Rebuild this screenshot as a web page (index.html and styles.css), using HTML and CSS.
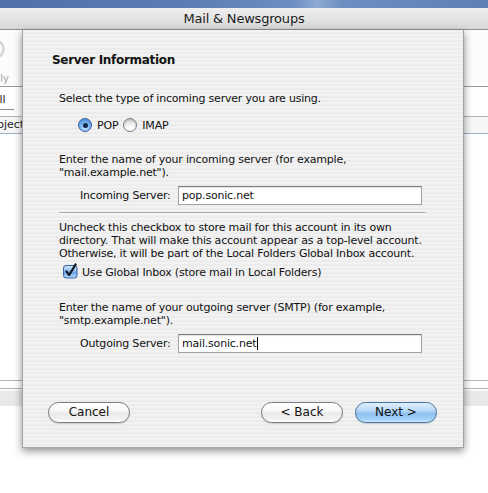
FILE: index.html
```html
<!DOCTYPE html>
<html lang="en">
<head>
<meta charset="utf-8">
<title>Mail &amp; Newsgroups</title>
<link rel="stylesheet" href="styles.css">
</head>
<body>
<div class="screen">
  <div class="desktop"></div>
  <div class="window">
    <div class="titlebar">Mail &amp; Newsgroups</div>
    <div class="content">
      <div class="toolbar">
        <div class="tool">
          <svg class="tool-icon" width="22" height="22" viewBox="0 0 22 22">
            <circle cx="11" cy="11" r="8.5" fill="none" stroke="#d4d4d4" stroke-width="2.5"/>
            <path d="M6 9 L11 5 L11 13 Z" fill="#d9d9d9"/>
          </svg>
          <span class="tool-label">Reply</span>
        </div>
      </div>
      <div class="hr dark"></div>
      <div class="filterbar"><span class="popup">All</span></div>
      <div class="hr"></div>
      <div class="colheader"><span class="col">Subject</span></div>
      <div class="hr blue"></div>
      <div class="list"></div>
      <div class="hr"></div>
      <div class="gap"></div>
      <div class="hr"></div>
      <div class="statusband"></div>
    </div>

    <div class="sheet">
      <div class="sheet-title">Server Information</div>
      <div class="form">
        <p class="prompt first">Select the type of incoming server you are using.</p>
        <div class="radios">
          <span class="radio on"></span><span class="rlabel">POP</span>
          <span class="radio"></span><span class="rlabel">IMAP</span>
        </div>
        <p class="prompt gap20">Enter the name of your incoming server (for example,<br>"mail.example.net").</p>
        <div class="field">
          <label class="flabel">Incoming Server:</label>
          <div class="input">pop.sonic.net</div>
        </div>
        <div class="sep"></div>
        <p class="prompt gap7">Uncheck this checkbox to store mail for this account in its own<br>directory. That will make this account appear as a top-level account.<br>Otherwise, it will be part of the Local Folders Global Inbox account.</p>
        <div class="checkrow">
          <svg class="check" width="15" height="16" viewBox="0 0 15 16">
            <defs>
              <linearGradient id="cbg" x1="0" y1="0" x2="0" y2="1">
                <stop offset="0" stop-color="#d3e8fd"/>
                <stop offset="0.45" stop-color="#8dbdf0"/>
                <stop offset="0.55" stop-color="#6aa4e8"/>
                <stop offset="1" stop-color="#b3dafc"/>
              </linearGradient>
            </defs>
            <rect x="0.5" y="2.5" width="13.5" height="12.5" rx="2.5" fill="url(#cbg)" stroke="#3b64a0"/>
            <path d="M3.4 8.4 L6.2 12 L12.6 1.4" fill="none" stroke="#15171f" stroke-width="2.1" stroke-linecap="round" stroke-linejoin="round"/>
          </svg>
          <span>Use Global Inbox (store mail in Local Folders)</span>
        </div>
        <p class="prompt gap22">Enter the name of your outgoing server (SMTP) (for example,<br>"smtp.example.net").</p>
        <div class="field">
          <label class="flabel">Outgoing Server:</label>
          <div class="input">mail.sonic.net<span class="caret"></span></div>
        </div>
      </div>
      <div class="buttons">
        <span class="btn">Cancel</span>
        <span class="spring"></span>
        <span class="btn">&lt; Back</span>
        <span class="btn default">Next &gt;</span>
      </div>
    </div>
  </div>
</div>
</body>
</html>
```

FILE: styles.css
```css
* { box-sizing: border-box; }
html, body { margin: 0; padding: 0; }
body {
  width: 488px;
  height: 493px;
  overflow: hidden;
  background: #ffffff;
  font-family: "DejaVu Sans", "Lucida Grande", sans-serif;
  color: #000;
}
.screen { position: relative; width: 488px; height: 493px; overflow: hidden; }

.desktop {
  height: 8px;
  background: linear-gradient(90deg, #4e72a8 0%, #5b7eb4 40%, #6c8ec1 60%, #8eaad2 65%, #6d8ec0 70%, #5d80b5 100%);
}

.window { position: relative; height: 485px; }

.titlebar {
  height: 22px;
  line-height: 21px;
  text-align: center;
  font-size: 13px;
  letter-spacing: -0.2px;
  color: #1c1c1c;
  background: linear-gradient(#efefef, #d8d8d8);
  border-bottom: 1px solid #8f8f8f;
}

.content { background: #fff; }

.toolbar { height: 56px; display: flex; background: #fcfcfc; }
.tool {
  width: 28px;
  margin-left: -19px;
  display: flex;
  flex-direction: column;
  align-items: center;
  padding-top: 8px;
}
.tool-icon { display: block; }
.tool-label {
  margin-top: 13px;
  font-size: 10px;
  color: #a3a3a3;
  white-space: nowrap;
}

.hr { height: 1px; background: #b4b4b4; }
.hr.dark { background: #9a9a9a; }
.hr.blue { background: #9fb2cd; }

.filterbar { height: 29px; padding-top: 4px; }
.popup {
  display: block;
  width: 40px;
  margin-left: -26px;
  height: 19px;
  line-height: 18px;
  padding-left: 18px;
  font-size: 11px;
  color: #1d1d1d;
  border-bottom: 1px solid #8c8c8c;
}

.colheader { height: 16px; line-height: 16px; background: #f6f6f6; }
.col { display: block; margin-left: -17px; font-size: 11px; color: #1d1d1d; }

.list { height: 246px; }
.gap { height: 7px; }
.statusband { height: 16px; margin-top: 1px; background: #e9e9e9; border-top: 1px solid #f4f4f4; }

/* Sheet */
.sheet {
  position: absolute;
  left: 22px;
  top: 22px;
  width: 442px;
  height: 418px;
  padding: 22px 26px 0 25px;
  background: repeating-linear-gradient(#f2f2f2 0 2px, #ececec 2px 4px);
  border: 1px solid #a3a3a3;
  border-top: none;
  box-shadow: 0 3px 8px rgba(0, 0, 0, 0.45);
  font-size: 11px;
  letter-spacing: -0.2px;
  line-height: 13px;
  color: #111;
}

.sheet-title {
  margin-left: 4px;
  font-size: 12px;
  font-weight: bold;
  letter-spacing: -0.3px;
  line-height: 16px;
  color: #111;
}

.form { padding: 0 11px; }

.prompt { margin: 0; }
.prompt.first { margin-top: 24px; }
.prompt.gap20 { margin-top: 20px; }
.prompt.gap7 { margin-top: 7px; }
.prompt.gap22 { margin-top: 22px; }

.radios {
  margin-top: 12px;
  height: 16px;
  display: flex;
  align-items: center;
  padding-left: 19px;
}
.radio {
  width: 14px;
  height: 14px;
  border-radius: 50%;
  border: 1px solid #7c7c7c;
  background: linear-gradient(#d6d6d6, #ffffff 75%);
  box-shadow: inset 0 1px 2px rgba(0, 0, 0, 0.2);
  display: flex;
  align-items: center;
  justify-content: center;
}
.radio.on {
  border-color: #34629f;
  background: radial-gradient(circle at 50% 75%, #c4e4ff 0, #7ab3ee 45%, #3f7ccf 100%);
  box-shadow: none;
}
.radio.on::after {
  content: "";
  width: 5px;
  height: 5px;
  border-radius: 50%;
  background: #13284a;
}
.rlabel { margin-left: 5px; margin-right: 5px; }

.field {
  margin-top: 7px;
  height: 19px;
  display: flex;
  align-items: center;
  padding-left: 21px;
}
.flabel { width: 98px; white-space: nowrap; }
.input {
  width: 244px;
  height: 19px;
  border: 1px solid #a2a2a2;
  border-top-color: #7e7e7e;
  background: #fff;
  box-shadow: inset 0 1px 1px rgba(0, 0, 0, 0.12);
  padding-left: 3px;
  line-height: 17px;
  display: flex;
  align-items: center;
}
.caret {
  display: inline-block;
  width: 1px;
  height: 13px;
  margin-left: 1px;
  background: #000;
}

.sep {
  margin-top: 7px;
  height: 2px;
  border-top: 1px solid #aaaaaa;
  border-bottom: 1px solid #fbfbfb;
}

.checkrow {
  margin-top: 5px;
  height: 14px;
  display: flex;
  align-items: center;
  padding-left: 4px;
}
.check { display: block; flex: none; margin-top: -2px; }
.checkrow span { margin-left: 4px; }

.buttons {
  margin-top: 49px;
  display: flex;
  align-items: center;
  gap: 12px;
}
.spring { flex: 1; }
.btn {
  width: 82px;
  height: 21px;
  border-radius: 11px;
  border: 1px solid #7b7b7b;
  background: linear-gradient(#ffffff 0%, #f8f8f8 40%, #e9e9e9 55%, #f3f3f3 85%, #ffffff 100%);
  box-shadow: 0 1px 1px rgba(0, 0, 0, 0.15);
  font-size: 12px;
  letter-spacing: 0;
  line-height: 19px;
  text-align: center;
  color: #121212;
}
.btn.default {
  border-color: #45709f;
  background: linear-gradient(#e0effd 0%, #b9daf8 40%, #8fc1f1 55%, #a3d0fa 85%, #c8e7ff 100%);
}
```
